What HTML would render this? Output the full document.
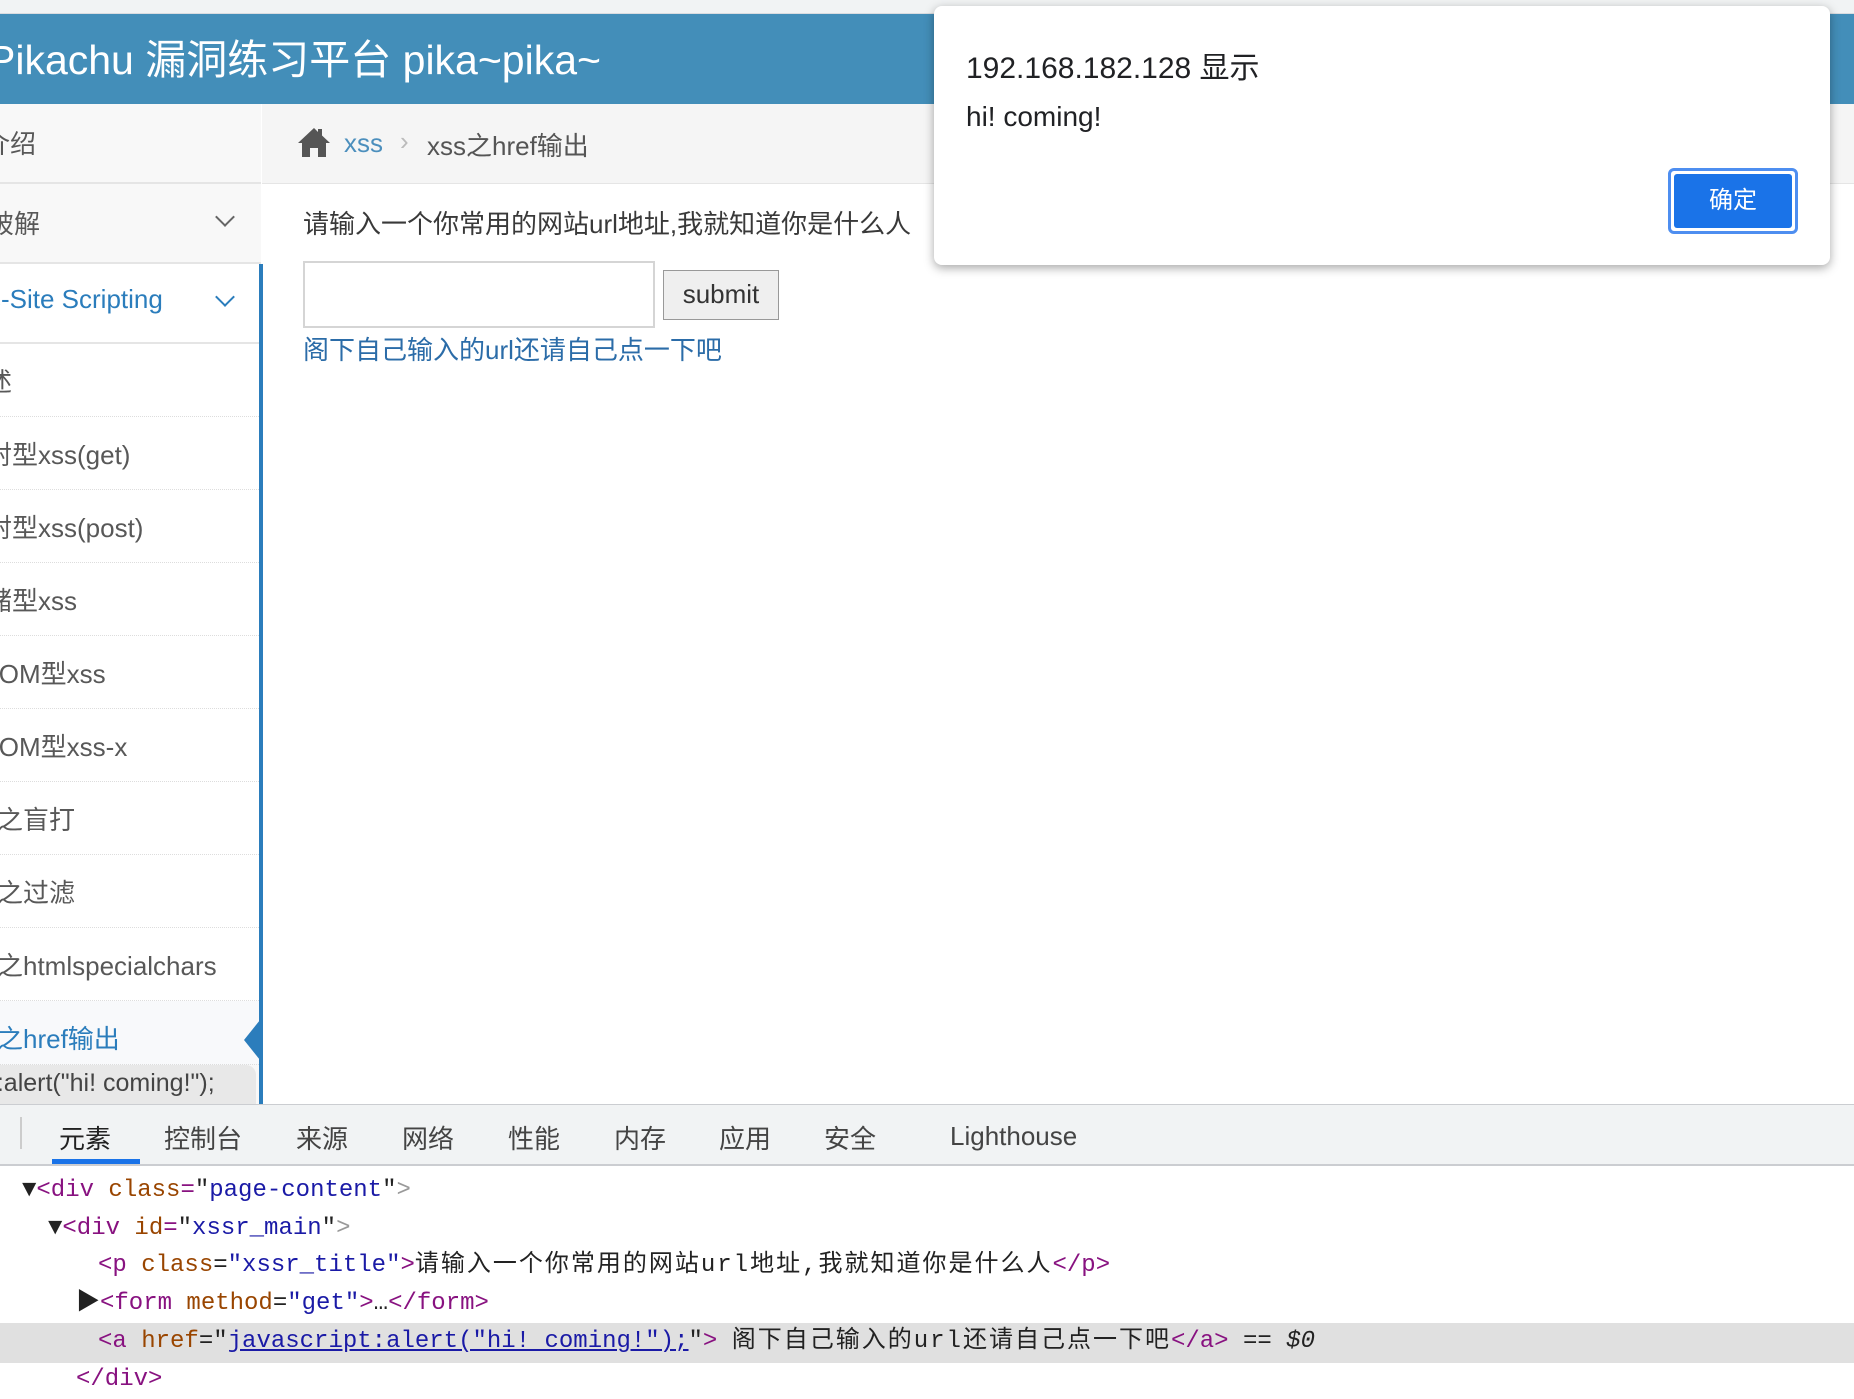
<!DOCTYPE html>
<html><head><meta charset="utf-8"><style>
*{margin:0;padding:0;box-sizing:border-box}
body{width:1854px;height:1376px;overflow:hidden;background:#fff;position:relative;font-family:"Liberation Sans","Noto Sans CJK SC",sans-serif;color:#393939}
.abs{position:absolute;white-space:nowrap}
#top{left:0;top:0;width:1854px;height:14px;background:#f1f3f4;border-bottom:1px solid #dadce0}
#hdr{left:0;top:14px;width:1854px;height:90px;background:#438eb9}
#hdr span{position:absolute;left:-12px;top:12px;font-size:41px;color:#fff}
#side{left:0;top:104px;width:261px;height:1000px;background:#f8f8f8;border-right:1px solid #ccc}
.it{position:absolute;left:0;width:261px;font-size:26px;color:#585858;border-bottom:1px dotted #ddd;background:#fff;overflow:hidden}
.chev{position:absolute;right:29px;width:14px;height:14px;border-right:2px solid #666;border-bottom:2px solid #666;transform:rotate(45deg)}
#bc{left:262px;top:104px;width:1600px;height:80px;background:#f5f5f5;border-bottom:1px solid #e5e5e5}
#dt{left:0;top:1104px;width:1854px;height:62px;background:#f1f3f4;border-top:1px solid #cbcdd1;border-bottom:2px solid #cbcdd1}
.tab{position:absolute;top:14px;font-size:26px;color:#444}
.code{position:absolute;left:0;height:38px;line-height:38px;font-family:"Liberation Mono","Noto Sans CJK SC",monospace;font-size:24px;color:#222;white-space:nowrap}
.cj{letter-spacing:2px}
.tg{color:#881280}.at{color:#994500}.av{color:#1a1aa6}.br{color:#999}
</style></head><body>
<div class="abs" id="top"></div>
<div class="abs" id="hdr"><span>Pikachu 漏洞练习平台 pika~pika~</span></div>
<div class="abs" id="side">
 <div class="it" style="top:0;height:80px;background:#f8f8f8;border-bottom:2px solid #e5e5e5"><span style="position:absolute;left:-42px;top:20px">简介绍</span></div>
 <div class="it" style="top:80px;height:80px;background:#f8f8f8;border-bottom:2px solid #e5e5e5"><span style="position:absolute;left:-64px;top:20px">暴力破解</span><div class="chev" style="top:26px"></div></div>
 <div class="it" style="top:160px;height:80px;background:#fff;border-bottom:2px solid #e5e5e5"><span style="position:absolute;left:-12px;top:20px;color:#2b7dbc">s-Site Scripting</span><div class="chev" style="top:26px;border-color:#2b7dbc"></div></div>
 <div class="it" style="top:240px;height:73px"><span style="position:absolute;left:-40px;top:18px">概述</span></div>
 <div class="it" style="top:313px;height:73px"><span style="position:absolute;left:-40px;top:18px">反射型xss(get)</span></div>
 <div class="it" style="top:386px;height:73px"><span style="position:absolute;left:-40px;top:18px">反射型xss(post)</span></div>
 <div class="it" style="top:459px;height:73px"><span style="position:absolute;left:-40px;top:18px">存储型xss</span></div>
 <div class="it" style="top:532px;height:73px"><span style="position:absolute;left:-20px;top:18px">DOM型xss</span></div>
 <div class="it" style="top:605px;height:73px"><span style="position:absolute;left:-20px;top:18px">DOM型xss-x</span></div>
 <div class="it" style="top:678px;height:73px"><span style="position:absolute;left:-42px;top:18px">xss之盲打</span></div>
 <div class="it" style="top:751px;height:73px"><span style="position:absolute;left:-42px;top:18px">xss之过滤</span></div>
 <div class="it" style="top:824px;height:73px"><span style="position:absolute;left:-42px;top:18px">xss之htmlspecialchars</span></div>
 <div class="it" style="top:897px;height:64px;background:#f8f9fb"><span style="position:absolute;left:-42px;top:18px;color:#2b7dbc">xss之href输出</span></div>
 <div class="it" style="top:961px;height:44px;background:#e8e8e8;border-radius:0 10px 0 0;width:256px"><span style="position:absolute;left:-24px;top:4px;color:#444;font-size:25px">pt:alert("hi! coming!");</span></div>
</div>
<div class="abs" style="left:259px;top:264px;width:4px;height:840px;background:#2b7dbc"></div>
<div class="abs" style="left:244px;top:1020px;width:0;height:0;border-top:20px solid transparent;border-bottom:20px solid transparent;border-right:16px solid #2b7dbc"></div>
<div class="abs" id="bc">
 <svg style="position:absolute;left:34px;top:22px" width="36" height="32" viewBox="0 0 36 32"><path d="M18 2 L2 17 L6 17 L6 31 L14 31 L14 22 L22 22 L22 31 L30 31 L30 17 L34 17 L26 9.5 L26 3 L22 3 L22 6 Z" fill="#555"/></svg>
 <span class="abs" style="left:82px;top:24px;font-size:26px;color:#4c8fbd">xss</span>
 <span class="abs" style="left:138px;top:22px;font-size:26px;color:#bbb">›</span>
 <span class="abs" style="left:165px;top:22px;font-size:26px;color:#555">xss之href输出</span>
</div>
<div class="abs" style="left:303px;top:204px;font-size:26px;color:#393939">请输入一个你常用的网站url地址,我就知道你是什么人</div>
<div class="abs" style="left:303px;top:261px;width:352px;height:67px;border:2px solid #d5d5d5;background:#fff"></div>
<div class="abs" style="left:663px;top:270px;width:116px;height:50px;border:1px solid #999;background:#efefef;font-size:26px;color:#333;text-align:center;line-height:46px">submit</div>
<div class="abs" style="left:303px;top:330px;font-size:26px;color:#2b6ca8">阁下自己输入的url还请自己点一下吧</div>

<div class="abs" style="left:934px;top:6px;width:896px;height:259px;background:#fff;border-radius:8px;box-shadow:0 3px 10px rgba(0,0,0,.35)">
 <div class="abs" style="left:32px;top:37px;font-size:30px;color:#202124">192.168.182.128 显示</div>
 <div class="abs" style="left:32px;top:95px;font-size:28px;color:#202124">hi! coming!</div>
 <div class="abs" style="left:734px;top:162px;width:130px;height:66px;border:3px solid #4e8ef0;border-radius:6px;padding:3px"><div style="width:100%;height:100%;background:#1a73e8;border-radius:3px;color:#fff;font-size:24px;text-align:center;line-height:54px">确定</div></div>
</div>

<div class="abs" id="dt">
 <div class="abs" style="left:20px;top:12px;width:2px;height:32px;background:#ccc"></div>
 <span class="tab" style="left:59px;color:#222">元素</span>
 <div class="abs" style="left:52px;top:54px;width:88px;height:5px;background:#1a73e8"></div>
 <span class="tab" style="left:164px">控制台</span>
 <span class="tab" style="left:296px">来源</span>
 <span class="tab" style="left:402px">网络</span>
 <span class="tab" style="left:508px">性能</span>
 <span class="tab" style="left:614px">内存</span>
 <span class="tab" style="left:719px">应用</span>
 <span class="tab" style="left:824px">安全</span>
 <span class="tab" style="left:950px;top:16px">Lighthouse</span>
</div>
<div class="abs" style="left:0;top:1323px;width:1854px;height:40px;background:#e0e0e0"></div>
<div class="code" style="top:1172px;left:22px">▼<span class="tg">&lt;div</span> <span class="at">class</span><span class="tg">=</span>"<span class="av">page-content</span>"<span class="br">&gt;</span></div>
<div class="code" style="top:1210px;left:48px">▼<span class="tg">&lt;div</span> <span class="at">id</span><span class="tg">=</span>"<span class="av">xssr_main</span>"<span class="br">&gt;</span></div>
<div class="code" style="top:1247px;left:98px"><span class="tg">&lt;p</span> <span class="at">class</span>=<span class="av">"xssr_title"</span><span class="tg">&gt;</span><span class="cj">请输入一个你常用的网站url地址,我就知道你是什么人</span><span class="tg">&lt;/p&gt;</span></div>
<div class="code" style="top:1285px;left:76px">▶<span class="tg">&lt;form</span> <span class="at">method</span>=<span class="av">"get"</span><span class="tg">&gt;</span>…<span class="tg">&lt;/form&gt;</span></div>
<div class="code" style="top:1323px;left:98px"><span class="tg">&lt;a</span> <span class="at">href</span>="<span style="color:#1a1aa6;text-decoration:underline">javascript:alert("hi! coming!");</span>"<span class="tg">&gt;</span> <span class="cj">阁下自己输入的url还请自己点一下吧</span><span class="tg">&lt;/a&gt;</span> == <i>$0</i></div>
<div class="code" style="top:1361px;left:76px"><span class="tg">&lt;/div&gt;</span></div>
</body></html>
